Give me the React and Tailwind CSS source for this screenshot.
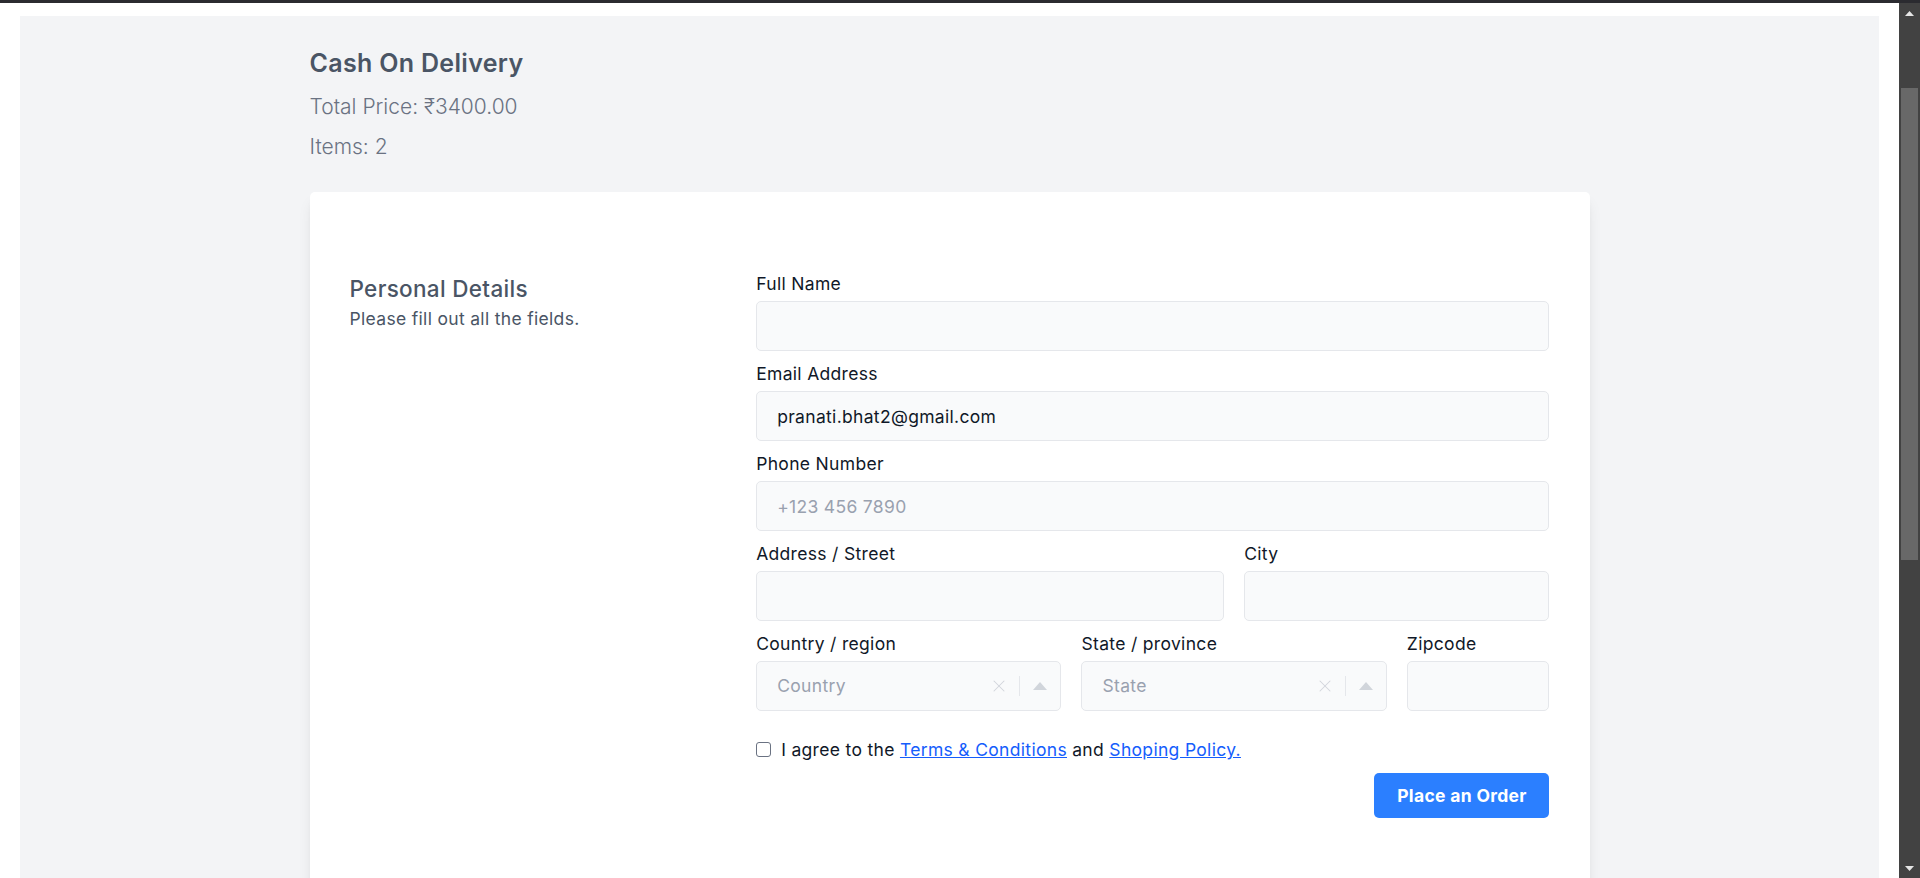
import { X } from "lucide-react";

function Field({ label, span, children }) {
  return (
    <div className={span}>
      <label className="block text-[17.5px] leading-[25px] text-gray-900">{label}</label>
      {children}
    </div>
  );
}

function TextInput({ value, placeholder }) {
  return (
    <input
      readOnly
      value={value || ""}
      placeholder={placeholder}
      className="mt-[5px] h-[50px] w-full rounded-[5px] border border-gray-200 bg-gray-50 px-[20px] text-[17.5px] text-gray-900 outline-none placeholder:text-gray-400"
    />
  );
}

function SelectBox({ placeholder }) {
  return (
    <div className="mt-[5px] flex h-[50px] w-full items-center rounded-[5px] border border-gray-200 bg-gray-50">
      <span className="flex-1 px-[20px] text-[17.5px] text-gray-400">{placeholder}</span>
      <X size={20} strokeWidth={1.25} className="text-gray-300" />
      <span className="ml-[10px] h-[20px] border-l border-gray-200" />
      <svg width="14" height="8" viewBox="0 0 14 8" className="ml-[13px] mr-[13px]">
        <path d="M7 0 L14 8 L0 8 Z" fill="#d1d5db" />
      </svg>
    </div>
  );
}

export default function App() {
  return (
    <div className="flex h-screen w-full flex-col overflow-hidden bg-white [font-family:Inter,'Liberation_Sans',sans-serif] tracking-[0.02em]">
      <div className="h-[3px] w-full shrink-0 bg-[#2b2b30]" />
      <div className="flex min-h-0 flex-1">
        <div className="flex min-w-0 flex-1 flex-col px-[20px] pt-[13px]">
          <div className="flex-1 bg-gray-100 pt-[30px]">
            <div className="mx-auto w-[1280px]">
              <h2 className="text-[25px] font-semibold leading-[35px] text-gray-600">Cash On Delivery</h2>
              <p className="mt-[8px] text-[21px] font-light leading-[35px] tracking-normal text-gray-500">
                Total Price: ₹3400.00
              </p>
              <p className="mt-[5px] text-[21px] font-light leading-[35px] tracking-normal text-gray-500">Items: 2</p>

              <div className="mt-[28px] rounded-[5px] bg-white px-[40px] pb-[200px] pt-[79px] shadow-lg">
                <div className="grid grid-cols-3 gap-x-[20px]">
                  <div className="text-gray-600">
                    <p className="text-[22.5px] font-medium leading-[35px]">Personal Details</p>
                    <p className="text-[17.5px] leading-[25px]">Please fill out all the fields.</p>
                  </div>

                  <div className="col-span-2 grid grid-cols-5 gap-x-[20px] gap-y-[10px]">
                    <Field label="Full Name" span="col-span-5">
                      <TextInput />
                    </Field>
                    <Field label="Email Address" span="col-span-5">
                      <TextInput value="pranati.bhat2@gmail.com" />
                    </Field>
                    <Field label="Phone Number" span="col-span-5">
                      <TextInput placeholder="+123 456 7890" />
                    </Field>
                    <Field label="Address / Street" span="col-span-3">
                      <TextInput />
                    </Field>
                    <Field label="City" span="col-span-2">
                      <TextInput />
                    </Field>
                    <Field label="Country / region" span="col-span-2">
                      <SelectBox placeholder="Country" />
                    </Field>
                    <Field label="State / province" span="col-span-2">
                      <SelectBox placeholder="State" />
                    </Field>
                    <Field label="Zipcode" span="col-span-1">
                      <TextInput />
                    </Field>

                    <div className="col-span-5 mt-[16px] flex items-center">
                      <span className="h-[15px] w-[15px] rounded-[3px] border-[1.5px] border-gray-500 bg-white" />
                      <span className="ml-[10px] text-[17.5px] leading-[25px] text-gray-900">
                        I agree to the{" "}
                        <a className="text-blue-600 underline decoration-blue-600">Terms &amp; Conditions</a> and{" "}
                        <a className="text-blue-600 underline decoration-blue-600">Shoping Policy.</a>
                      </span>
                    </div>

                    <div className="col-span-5 mt-[1px] flex justify-end">
                      <button className="w-[175px] rounded-[5px] bg-blue-500 py-[10px] text-center text-[17.5px] font-bold leading-[25px] text-white">
                        Place an Order
                      </button>
                    </div>
                  </div>
                </div>
              </div>
            </div>
          </div>
        </div>

        <div className="flex w-[21px] shrink-0 flex-col bg-[#424242]">
          <div className="flex h-[20px] items-center justify-center">
            <svg width="9" height="5" viewBox="0 0 9 5">
              <path d="M4.5 0 L9 5 L0 5 Z" fill="#e5e5e5" />
            </svg>
          </div>
          <div className="ml-[2px] mt-[65px] h-[472px] w-[17px] bg-[#686868]" />
          <div className="flex-1" />
          <div className="flex h-[20px] items-center justify-center">
            <svg width="9" height="5" viewBox="0 0 9 5">
              <path d="M0 0 L9 0 L4.5 5 Z" fill="#e5e5e5" />
            </svg>
          </div>
        </div>
      </div>
    </div>
  );
}
